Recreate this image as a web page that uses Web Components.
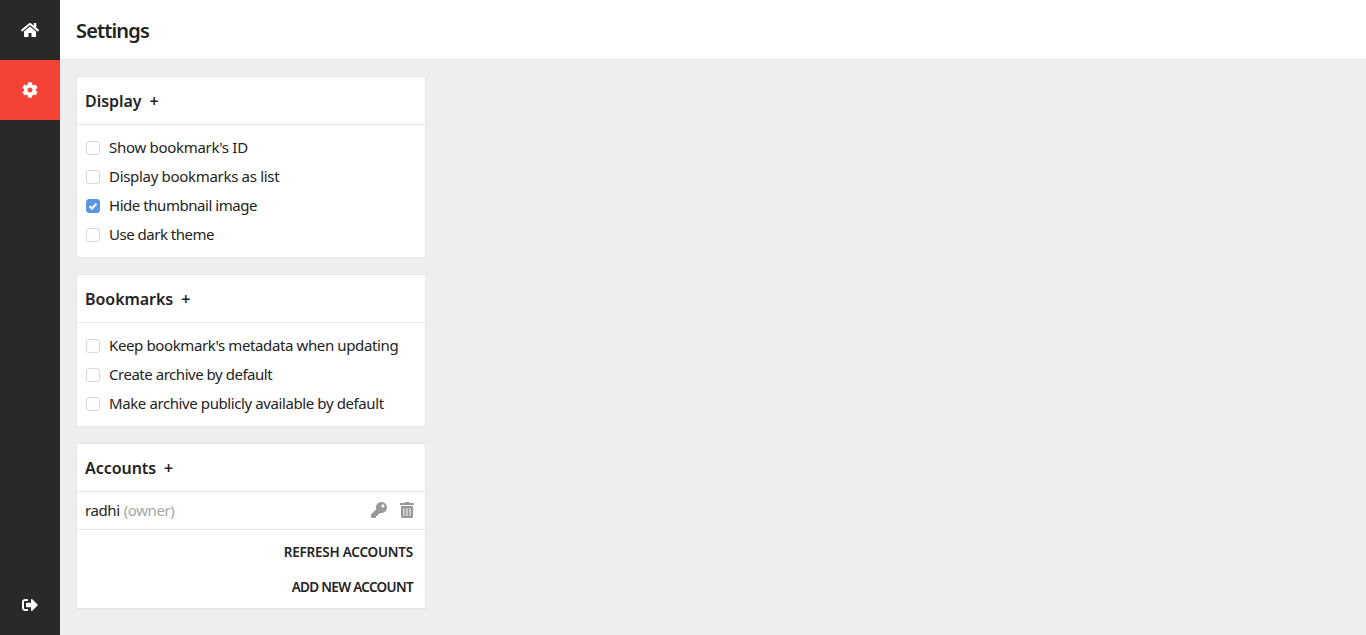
<!DOCTYPE html>
<html>
<head>
<meta charset="utf-8">
<title>Settings</title>
<style>
    html, body { margin: 0; height: 100%; }
    body { font-family: "Noto Sans", "Open Sans", sans-serif; font-size: 16px; color: #232323; overflow: hidden; }
    .rows { padding: 8px 8px 8px 9px; display: flex; flex-direction: column; }
    .buttons { padding: 4px 0; }
</style>
</head>
<body>
<app-shell title-text="Settings">
    <nav-button slot="nav" icon="home"></nav-button>
    <nav-button slot="nav" icon="cog" active></nav-button>
    <nav-button slot="foot" icon="logout"></nav-button>

    <settings-card label="Display">
        <div class="rows">
            <check-row label="Show bookmark's ID" style="letter-spacing:-0.29px"></check-row>
            <check-row label="Display bookmarks as list" style="letter-spacing:-0.31px"></check-row>
            <check-row label="Hide thumbnail image" style="letter-spacing:-0.45px" checked></check-row>
            <check-row label="Use dark theme" style="letter-spacing:-0.49px"></check-row>
        </div>
    </settings-card>

    <settings-card label="Bookmarks">
        <div class="rows">
            <check-row label="Keep bookmark's metadata when updating" style="letter-spacing:-0.38px"></check-row>
            <check-row label="Create archive by default" style="letter-spacing:-0.47px"></check-row>
            <check-row label="Make archive publicly available by default" style="letter-spacing:-0.4px"></check-row>
        </div>
    </settings-card>

    <settings-card label="Accounts">
        <account-row name="radhi" role="(owner)"></account-row>
        <div class="buttons">
            <text-button label="REFRESH ACCOUNTS" style="letter-spacing:-0.22px"></text-button>
            <text-button label="ADD NEW ACCOUNT" style="letter-spacing:-0.68px"></text-button>
        </div>
    </settings-card>
</app-shell>

<script>
"use strict";
const ICONS = {
    home: ["0 0 576 512", "M280.37 148.26L96 300.11V464a16 16 0 0 0 16 16l112.06-.29a16 16 0 0 0 15.92-16V368a16 16 0 0 1 16-16h64a16 16 0 0 1 16 16v95.64a16 16 0 0 0 16 16.05L464 480a16 16 0 0 0 16-16V300L295.67 148.26a12.19 12.19 0 0 0-15.3 0zM571.6 251.47L488 182.56V44.05a12 12 0 0 0-12-12h-56a12 12 0 0 0-12 12v72.61L318.47 43a48 48 0 0 0-61 0L4.34 251.47a12 12 0 0 0-1.6 16.9l25.5 31A12 12 0 0 0 45.15 301l235.22-193.74a12.19 12.19 0 0 1 15.3 0L530.9 301a12 12 0 0 0 16.9-1.6l25.5-31a12 12 0 0 0-1.7-16.93z"],
    cog: ["0 0 512 512", "M487.4 315.7l-42.6-24.6c4.3-23.2 4.3-47 0-70.2l42.6-24.6c4.9-2.8 7.1-8.6 5.5-14-11.1-35.6-30-67.8-54.7-94.6-3.8-4.1-10-5.1-14.8-2.3L380.8 110c-17.9-15.4-38.5-27.3-60.8-35.1V25.8c0-5.6-3.9-10.5-9.4-11.7-36.7-8.2-74.3-7.8-109.2 0-5.5 1.2-9.4 6.1-9.4 11.7V75c-22.2 7.9-42.8 19.8-60.8 35.1L88.7 85.5c-4.9-2.8-11-1.9-14.8 2.3-24.7 26.7-43.6 58.9-54.7 94.6-1.7 5.4.6 11.2 5.5 14L67.3 221c-4.3 23.2-4.3 47 0 70.2l-42.6 24.6c-4.9 2.8-7.1 8.6-5.5 14 11.1 35.6 30 67.8 54.7 94.6 3.8 4.1 10 5.1 14.8 2.3l42.6-24.6c17.9 15.4 38.5 27.3 60.8 35.1v49.2c0 5.6 3.9 10.5 9.4 11.7 36.7 8.2 74.3 7.8 109.2 0 5.5-1.2 9.4-6.1 9.4-11.7v-49.2c22.2-7.9 42.8-19.8 60.8-35.1l42.6 24.6c4.9 2.8 11 1.9 14.8-2.3 24.7-26.7 43.6-58.9 54.7-94.6 1.5-5.5-.7-11.3-5.6-14.1zM256 336c-44.1 0-80-35.9-80-80s35.9-80 80-80 80 35.9 80 80-35.9 80-80 80z"],
    logout: ["0 0 512 512", "M497 273L329 441c-15 15-41 4.5-41-17v-96H152c-13.3 0-24-10.7-24-24v-96c0-13.3 10.7-24 24-24h136V88c0-21.4 25.9-32 41-17l168 168c9.3 9.4 9.3 24.6 0 34zM192 436v-40c0-6.6-5.4-12-12-12H96c-17.7 0-32-14.3-32-32V160c0-17.7 14.3-32 32-32h84c6.6 0 12-5.4 12-12V76c0-6.6-5.4-12-12-12H96c-53 0-96 43-96 96v192c0 53 43 96 96 96h84c6.6 0 12-5.4 12-12z"],
    key: ["0 0 512 512", "M512 176.001C512 273.203 433.202 352 336 352c-11.22 0-22.19-1.062-32.827-3.069l-24.012 27.014A23.999 23.999 0 0 1 261.223 384H224v40c0 13.255-10.745 24-24 24h-40v40c0 13.255-10.745 24-24 24H24c-13.255 0-24-10.745-24-24v-78.059c0-6.365 2.529-12.47 7.029-16.971l161.802-161.802C163.108 213.814 160 195.271 160 176 160 78.798 238.797.001 335.999 0 433.488-.001 512 78.511 512 176.001zM336 128c0 26.51 21.49 48 48 48s48-21.49 48-48-21.49-48-48-48-48 21.49-48 48z"],
    trash: ["0 0 448 512", "M32 464a48 48 0 0 0 48 48h288a48 48 0 0 0 48-48V128H32zm272-256a16 16 0 0 1 32 0v224a16 16 0 0 1-32 0zm-96 0a16 16 0 0 1 32 0v224a16 16 0 0 1-32 0zm-96 0a16 16 0 0 1 32 0v224a16 16 0 0 1-32 0zM432 32H312l-9.4-18.7A24 24 0 0 0 281.1 0H166.8a23.72 23.72 0 0 0-21.4 13.3L136 32H16A16 16 0 0 0 0 48v32a16 16 0 0 0 16 16h416a16 16 0 0 0 16-16V48a16 16 0 0 0-16-16z"]
};
function icon_svg(name, h) {
    const [box, d] = ICONS[name];
    return String.raw `<svg height="${h}" viewBox="${box}" fill="currentColor" style="display:block"><path d="${d}"></path></svg>`;
}

class AppShell extends HTMLElement {
    constructor() {
        super();
        this.attachShadow({ mode: "open" });
        this.shadowRoot.innerHTML = String.raw `<style>
            :host{
                display : grid;
                grid-template-columns : 60px 1fr;
                height : 635px;
                background-color : #eeeeee;
            }
            .side{
                display : flex;
                flex-direction : column;
                background-color : #292929;
            }
            .spacer{ flex : 1; }
            .main{
                display : flex;
                flex-direction : column;
                min-width : 0;
            }
            .head{
                box-sizing : border-box;
                height : 60px;
                flex : none;
                display : flex;
                align-items : center;
                padding : 2px 16px 0;
                background-color : #ffffff;
                border-bottom : 1px solid #e5e5e5;
                font-size : 20px;
                font-weight : 600;
                letter-spacing : -0.85px;
            }
            .body{
                display : flex;
                flex-direction : column;
                align-items : flex-start;
                gap : 16px;
                padding : 16px;
            }
        </style>
        <div class="side">
            <slot name="nav"></slot>
            <div class="spacer"></div>
            <slot name="foot"></slot>
        </div>
        <div class="main">
            <div class="head">${this.getAttribute("title-text")}</div>
            <div class="body"><slot></slot></div>
        </div>`;
    }
}
customElements.define("app-shell", AppShell);

class NavButton extends HTMLElement {
    constructor() {
        super();
        this.attachShadow({ mode: "open" });
        this.shadowRoot.innerHTML = String.raw `<style>
            :host{
                display : flex;
                align-items : center;
                justify-content : center;
                width : 60px;
                height : 60px;
                color : #ffffff;
            }
            :host([active]){ background-color : #f44336; }
        </style>${icon_svg(this.getAttribute("icon"), 16)}`;
    }
}
customElements.define("nav-button", NavButton);

class SettingsCard extends HTMLElement {
    constructor() {
        super();
        this.attachShadow({ mode: "open" });
        this.shadowRoot.innerHTML = String.raw `<style>
            :host{
                display : block;
                box-sizing : border-box;
                width : 350px;
                background-color : #ffffff;
                border : 1px solid #e5e5e5;
            }
            .title{
                display : flex;
                align-items : center;
                height : 47px;
                padding : 0 8px;
                border-bottom : 1px solid #e5e5e5;
                font-weight : 600;
                letter-spacing : -0.05px;
            }
            .plus{ margin-left : 8px; }
        </style>
        <div class="title"><span>${this.getAttribute("label")}</span><span class="plus">+</span></div>
        <slot></slot>`;
    }
}
customElements.define("settings-card", SettingsCard);

class CheckRow extends HTMLElement {
    constructor() {
        super();
        this.attachShadow({ mode: "open" });
        this.shadowRoot.innerHTML = String.raw `<style>
            :host{
                display : flex;
                align-items : center;
                gap : 9px;
                height : 29px;
                font-size : 15px;
                letter-spacing : -0.35px;
                white-space : nowrap;
            }
            .box{
                box-sizing : border-box;
                width : 14px;
                height : 14px;
                border : 1px solid #d4d8e6;
                border-radius : 3px;
                background-color : #ffffff;
                display : flex;
            }
            :host([checked]) .box{
                border-color : #5a96e3;
                background-color : #5a96e3;
            }
            .text{ padding-bottom : 2px; }
        </style>
        <span class="box">${this.hasAttribute("checked") ? String.raw `<svg viewBox="0 0 12 12" width="12" height="12"><path d="M2.6 6.2l2.3 2.3 4.5-4.8" fill="none" stroke="#fff" stroke-width="2"></path></svg>` : ""}</span>
        <span class="text">${this.getAttribute("label")}</span>`;
    }
}
customElements.define("check-row", CheckRow);

class AccountRow extends HTMLElement {
    constructor() {
        super();
        this.attachShadow({ mode: "open" });
        this.shadowRoot.innerHTML = String.raw `<style>
            :host{
                display : flex;
                align-items : center;
                height : 35px;
                padding : 0 11px 2px 8px;
                border-bottom : 1px solid #e5e5e5;
                font-size : 15px;
                letter-spacing : -0.4px;
            }
            .role{ color : #a5a5a5; margin-left : 4px; }
            .actions{
                margin-left : auto;
                display : flex;
                align-items : center;
                gap : 13px;
                color : #999999;
            }
        </style>
        <span>${this.getAttribute("name")}</span>
        <span class="role">${this.getAttribute("role")}</span>
        <span class="actions">${icon_svg("key", 16)}${icon_svg("trash", 16)}</span>`;
    }
}
customElements.define("account-row", AccountRow);

class TextButton extends HTMLElement {
    constructor() {
        super();
        this.attachShadow({ mode: "open" });
        this.shadowRoot.innerHTML = String.raw `<style>
            :host{
                display : flex;
                align-items : center;
                justify-content : flex-end;
                height : 35px;
                padding : 0 12px;
                font-size : 13.5px;
                font-weight : 600;
            }
        </style>${this.getAttribute("label")}`;
    }
}
customElements.define("text-button", TextButton);
</script>
</body>
</html>
